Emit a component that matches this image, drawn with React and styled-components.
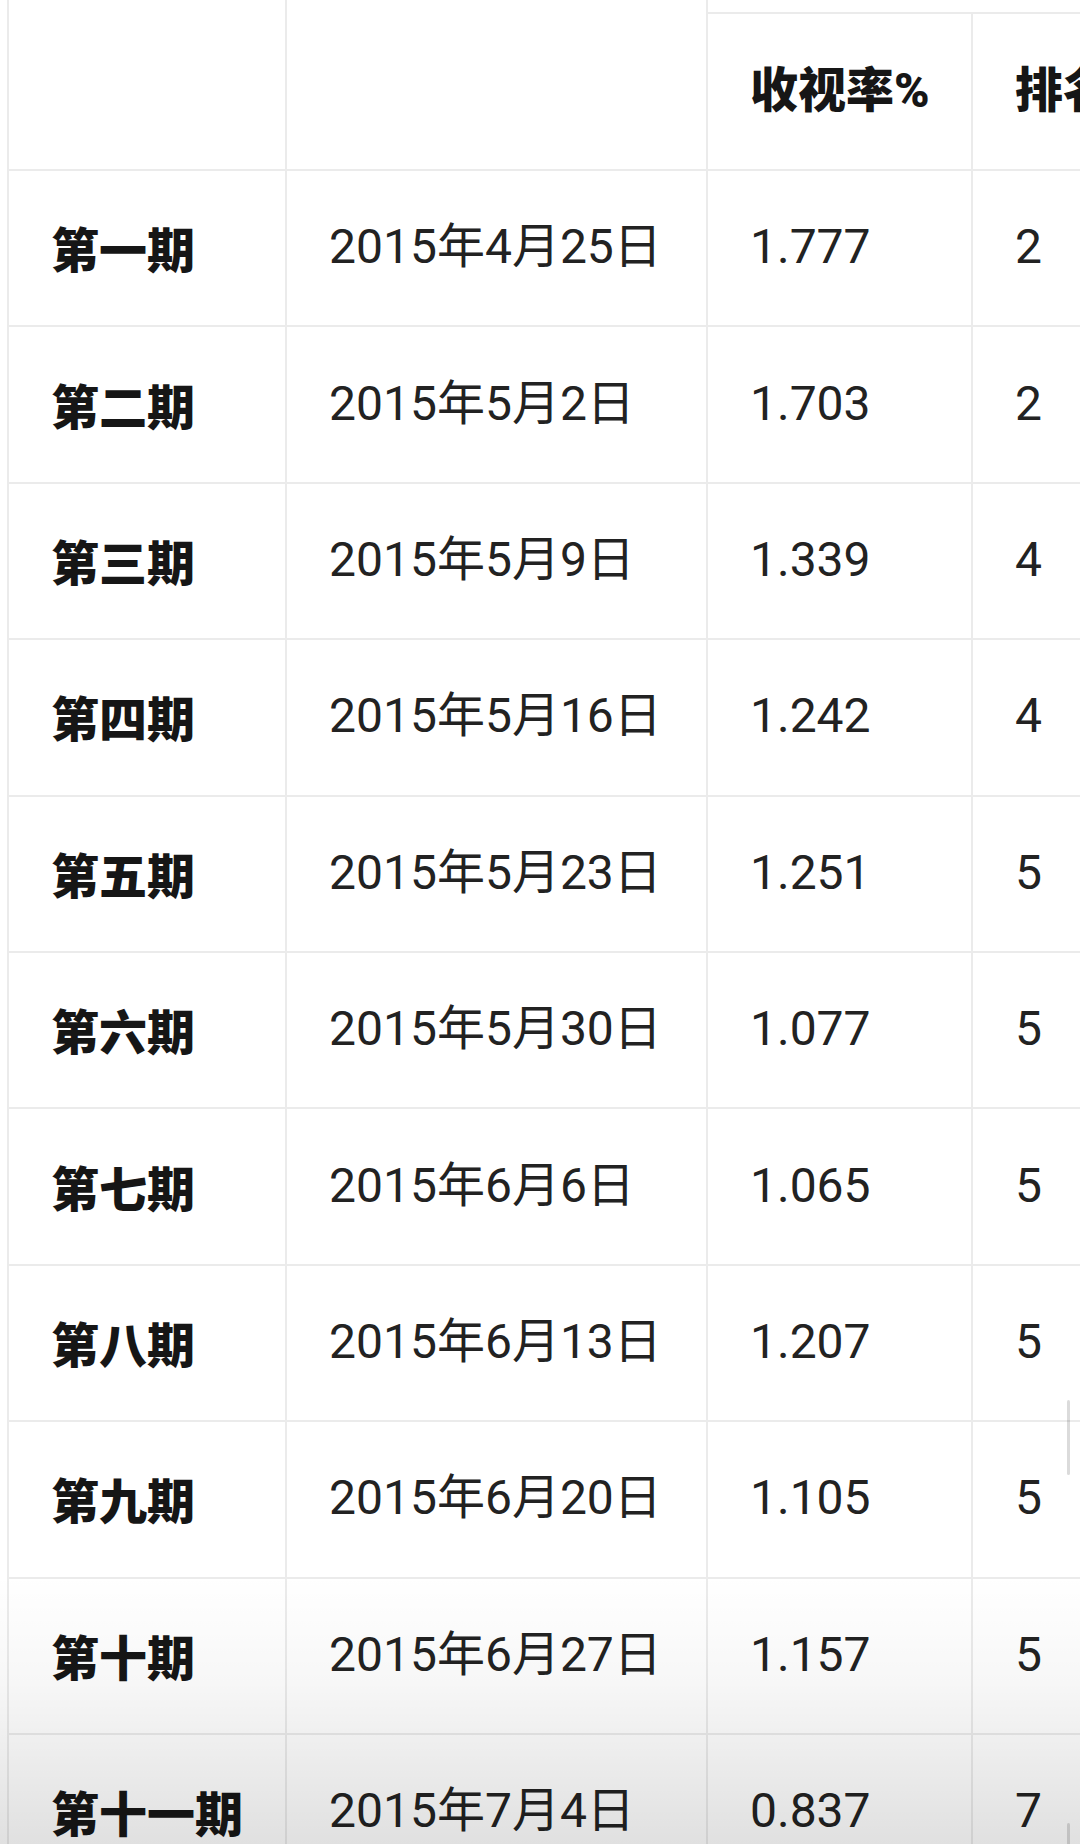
import React from "react"
import styled, { createGlobalStyle } from "styled-components"

const Global = createGlobalStyle`
  html, body {
    margin: 0;
    padding: 0;
    background: #fff;
  }
  body {
    font-family: Roboto, "Noto Sans CJK SC", sans-serif;
    color: #1d1d1d;
  }
`

const Screen = styled.div`
  position: relative;
  width: 1080px;
  height: 1844px;
  overflow: hidden;
  background: #fff;
`

const Table = styled.table`
  border-collapse: collapse;
  table-layout: fixed;
  width: 1264px;
  margin-left: 7px;
`

const Cell = styled.td`
  border: 2px solid #ebebeb;
  border-top: ${(p) => (p.$noTop ? "none" : "2px solid #ebebeb")};
  padding: 0 0 2px 42px;
  height: ${(p) => p.$h || "156.4px"};
  box-sizing: border-box;
  vertical-align: middle;
  font-family: ${(p) =>
    p.$bold ? '"Noto Sans CJK SC", sans-serif' : 'Roboto, "Noto Sans CJK SC", sans-serif'};
  font-weight: ${(p) => (p.$bold ? 900 : 400)};
  font-size: 48px;
  line-height: 1;
  white-space: nowrap;
  color: ${(p) => (p.$bold ? "#161616" : "#222")};
`

const HeadCell = styled(Cell).attrs({ as: "th" })`
  text-align: left;
  font-family: Roboto, "Noto Sans CJK SC", sans-serif;
  font-weight: 900;
  color: #161616;
`

const Fade = styled.div`
  position: absolute;
  left: 0;
  right: 0;
  bottom: 0;
  height: 270px;
  pointer-events: none;
  background: linear-gradient(to bottom, rgba(0, 0, 0, 0), rgba(0, 0, 0, 0.03) 40%, rgba(0, 0, 0, 0.12));
`

const ScrollThumb = styled.div`
  position: absolute;
  right: 10px;
  top: ${(p) => p.$top}px;
  width: 3px;
  height: ${(p) => p.$len}px;
  border-radius: 2px;
  background: rgba(0, 0, 0, 0.14);
`

const rows = [
  ["第一期", "2015年4月25日", "1.777", "2"],
  ["第二期", "2015年5月2日", "1.703", "2"],
  ["第三期", "2015年5月9日", "1.339", "4"],
  ["第四期", "2015年5月16日", "1.242", "4"],
  ["第五期", "2015年5月23日", "1.251", "5"],
  ["第六期", "2015年5月30日", "1.077", "5"],
  ["第七期", "2015年6月6日", "1.065", "5"],
  ["第八期", "2015年6月13日", "1.207", "5"],
  ["第九期", "2015年6月20日", "1.105", "5"],
  ["第十期", "2015年6月27日", "1.157", "5"],
  ["第十一期", "2015年7月4日", "0.837", "7"],
]

export default function App() {
  return (
    <Screen>
      <Global />
      <Table>
        <colgroup>
          <col style={{ width: 278 }} />
          <col style={{ width: 421 }} />
          <col style={{ width: 265 }} />
          <col style={{ width: 300 }} />
        </colgroup>
        <thead>
          <tr>
            <HeadCell rowSpan={2} $noTop $h="170px" />
            <HeadCell rowSpan={2} $noTop $h="170px" />
            <HeadCell $noTop $h="13px" colSpan={2} />
          </tr>
          <tr>
            <HeadCell $h="157px">收视率%</HeadCell>
            <HeadCell $h="157px">排名</HeadCell>
          </tr>
        </thead>
        <tbody>
          {rows.map(([ep, date, rate, rank]) => (
            <tr key={ep}>
              <Cell $bold>{ep}</Cell>
              <Cell>{date}</Cell>
              <Cell>{rate}</Cell>
              <Cell>{rank}</Cell>
            </tr>
          ))}
        </tbody>
      </Table>
      <Fade />
      <ScrollThumb $top={1400} $len={75} />
      <ScrollThumb $top={1823} $len={30} />
    </Screen>
  )
}
